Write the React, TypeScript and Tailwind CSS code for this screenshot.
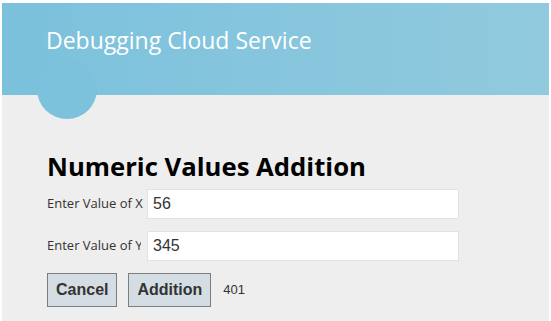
import React, { useState } from 'react';

const App: React.FC = () => {
  const [x, setX] = useState('56');
  const [y, setY] = useState('345');
  const [sum, setSum] = useState<number | null>(401);

  const add = () => setSum((parseFloat(x) || 0) + (parseFloat(y) || 0));
  const cancel = () => {
    setX('');
    setY('');
    setSum(null);
  };

  return (
    <div className="w-[551px] h-[321px] bg-white pt-[3px] px-[2px] overflow-hidden">
      <div className="h-full bg-[#eeeeee]" style={{ fontFamily: '"Open Sans", "Noto Sans", sans-serif' }}>
        <header className="relative h-[92px] bg-gradient-to-r from-[#7bc1dc] to-[#91cade]">
          <h1 className="pl-[44px] pt-[22px] text-[23px] leading-[30px] text-white">Debugging Cloud Service</h1>
          {/* decorative tab under the banner */}
          <div className="absolute left-[35px] top-[56px] w-[60px] h-[60px] rounded-full bg-[#7cc2dc]" />
        </header>

        <main className="px-[45px] pt-[56px]">
          <h2 className="text-[25.7px] leading-[32px] font-bold text-black">Numeric Values Addition</h2>

          <div className="mt-[6px] space-y-[12px]">
            <div className="flex items-center">
              <label className="w-[100px] shrink-0 overflow-hidden whitespace-nowrap text-[13px] text-[#333]">Enter Value of X</label>
              <input
                value={x}
                onChange={(e) => setX(e.target.value)}
                className="w-[312px] h-[30px] bg-white border border-[#e2e2e2] px-[5px] text-[16px] text-[#333] outline-none"
                style={{ fontFamily: '"Liberation Sans", Arial, sans-serif' }}
              />
            </div>
            <div className="flex items-center">
              <label className="w-[94px] mr-[6px] shrink-0 overflow-hidden whitespace-nowrap text-[13px] text-[#333]">Enter Value of Y</label>
              <input
                value={y}
                onChange={(e) => setY(e.target.value)}
                className="w-[312px] h-[30px] bg-white border border-[#e2e2e2] px-[5px] text-[16px] text-[#333] outline-none"
                style={{ fontFamily: '"Liberation Sans", Arial, sans-serif' }}
              />
            </div>
          </div>

          <div
            className="mt-[12px] flex items-center gap-[11px]"
            style={{ fontFamily: '"Liberation Sans", Arial, sans-serif' }}
          >
            <button
              onClick={cancel}
              className="h-[34px] px-[8px] bg-[#d4dde3] border border-[#7d7d7d] text-[16px] font-bold text-[#333]"
            >
              Cancel
            </button>
            <button
              onClick={add}
              className="h-[34px] px-[8px] bg-[#d4dde3] border border-[#7d7d7d] text-[16px] font-bold text-[#333]"
            >
              Addition
            </button>
            <span className="ml-[1px] text-[13px] text-[#333]">{sum ?? ''}</span>
          </div>
        </main>
      </div>
    </div>
  );
};

export default App;
